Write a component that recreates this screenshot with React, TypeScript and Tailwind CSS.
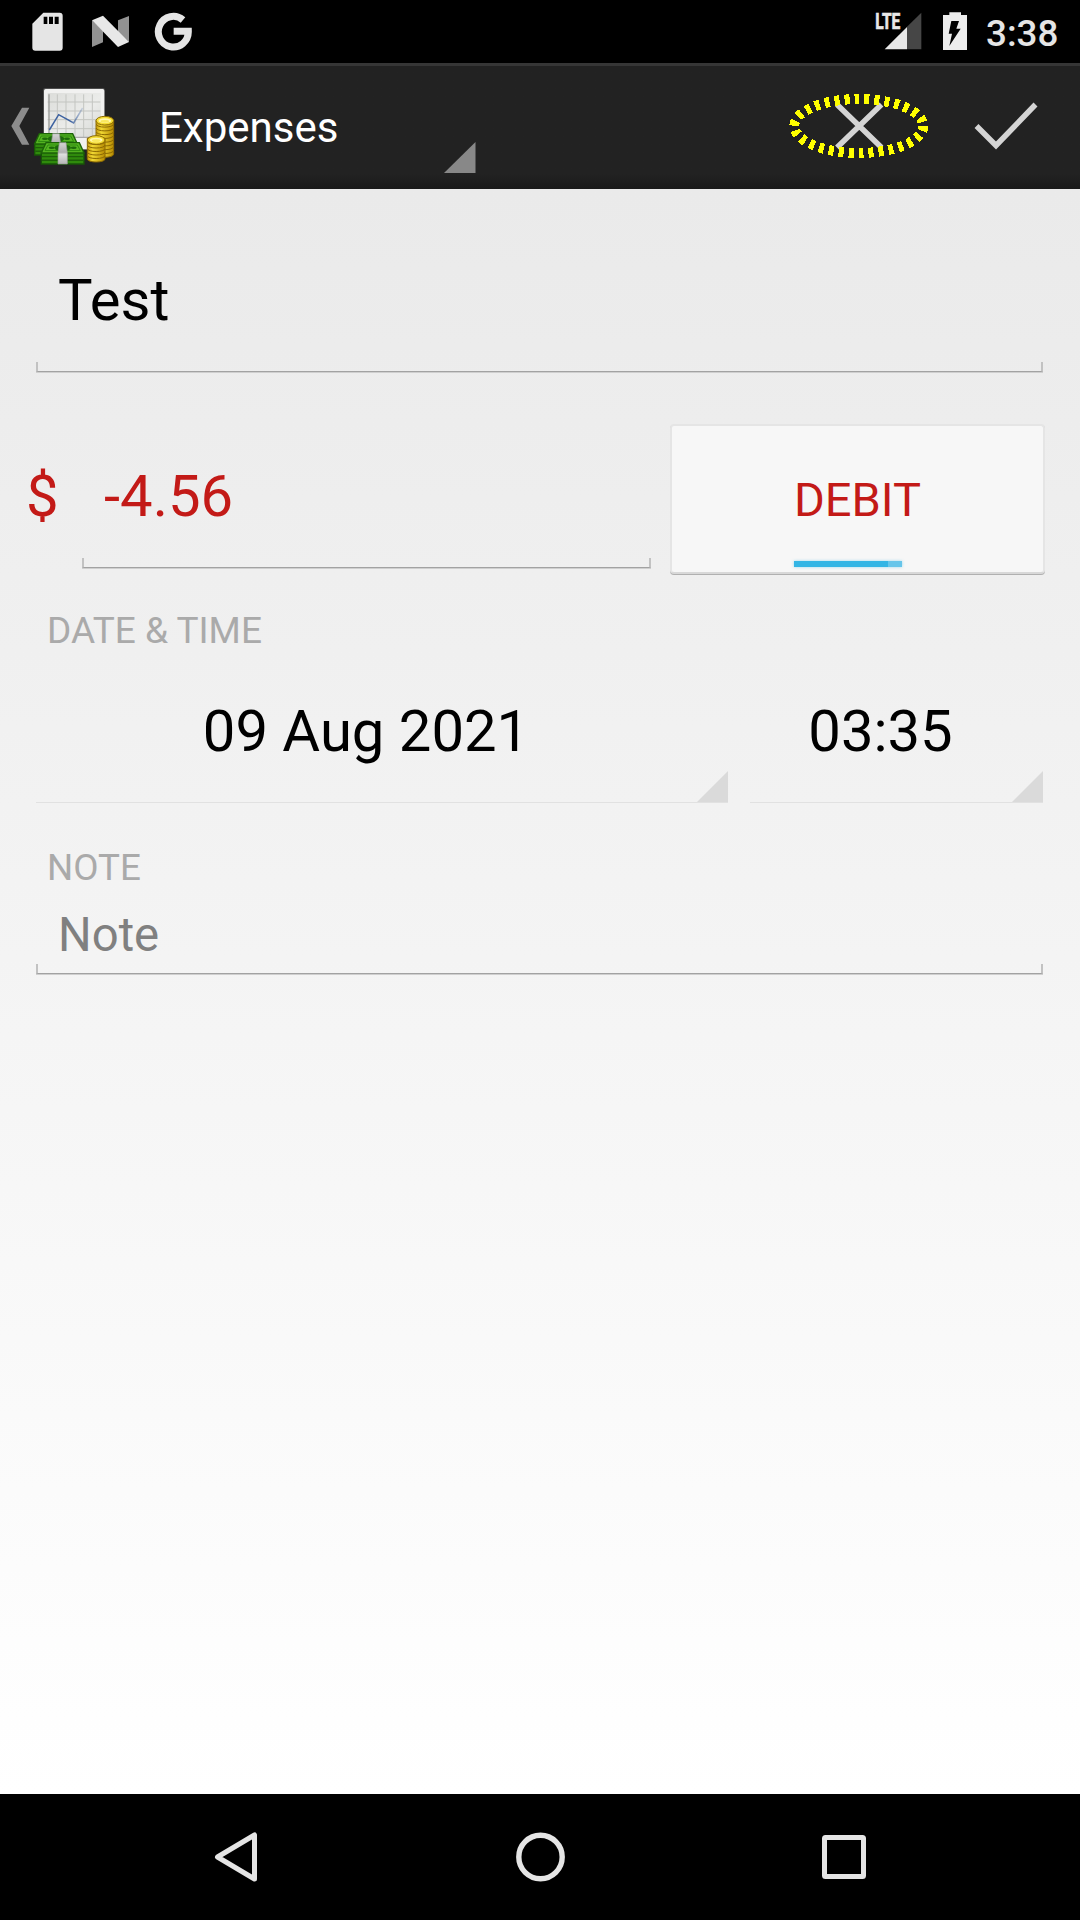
import React from "react";

function StatusBar() {
  return (
    <div className="flex h-[63px] items-start bg-black">
      <svg className="mt-3 ml-8 h-[39px] w-[31px]" viewBox="96 36 93 117">
        <path
          fill="#e5e5e5"
          fillRule="evenodd"
          d="M130 38H179Q188 38 188 47V143Q188 152 179 152H106Q97 152 97 143V71ZM131 50V72H142V50ZM147 50V72H159V50ZM164 50V72H176V50Z"
        />
      </svg>
      <svg className="mt-[15px] ml-[28px] h-[33px] w-[39px]" viewBox="273 45 117 99">
        <path fill="#929292" d="M276 61L309 92V127L276 141ZM354 61L387 48V127L354 96Z" />
        <path fill="#e8e8e8" d="M276 61L309 47L387 126L354 141Z" />
      </svg>
      <svg className="mt-[11px] ml-[24px] h-[41px] w-[39px]" viewBox="462 33 117 123">
        <path
          fill="none"
          stroke="#e5e5e5"
          strokeWidth="21"
          d="M549 60A45 46 0 1 0 565 94H521"
        />
      </svg>
      <div className="ml-auto flex h-full items-start">
        <svg className="mt-[4px] h-[47px] w-[48px] overflow-visible" viewBox="42 12 144 141">
          <path fill="#464646" d="M141 80L184 38V148H141Z" />
          <path fill="#e8e8e8" d="M74 148L141 81V148Z" />
          <text
            x="46"
            y="87"
            fontFamily="Roboto"
            fontWeight="700"
            fontSize="66"
            fill="#e8e8e8"
            stroke="#e8e8e8"
            strokeWidth="2"
            textLength="75"
            lengthAdjust="spacingAndGlyphs"
          >
            LTE
          </text>
        </svg>
        <svg className="mt-3 ml-[20px] h-[39px] w-[27px]" viewBox="246 36 81 117">
          <path
            fill="#ececec"
            d="M249 45H268V37H303V45H321V150H249Z"
          />
          <path fill="#000" d="M274 63H297L289 86H302L268 138L276 101H266Z" />
        </svg>
        <span className="ml-[17px] w-[94px] text-[36.75px] leading-[67px] font-medium text-[#e5e5e5]">3:38</span>
      </div>
    </div>
  );
}

const coinStackTall = [0, 1, 2, 3, 4, 5, 6, 7, 8];
const coinStackShort = [0, 1, 2, 3, 4, 5];

function BillStack({ x, y, w, h }: { x: number; y: number; w: number; h: number }) {
  const top = h * 0.48;
  return (
    <g transform={`translate(${x} ${y})`}>
      <path d={`M2 ${top}H${w - 2}V${h}H2Z`} fill="#2f8a0c" stroke="#175407" strokeWidth="4" />
      <path d={`M4 ${top + 11}H${w - 4}M4 ${top + 22}H${w - 4}`} stroke="#1d5f08" strokeWidth="4" />
      <path d={`M16 0H${w - 16}L${w - 2} ${top}H2Z`} fill="#55b422" stroke="#1c6208" strokeWidth="4" />
      <path
        d={`M22 7H${w - 22}L${w - 13} ${top - 7}H13Z`}
        fill="none"
        stroke="#2e8a10"
        strokeWidth="3"
      />
      <ellipse cx={w / 2} cy={top / 2} rx="25" ry="10" fill="#1d6a0b" />
      <ellipse cx="33" cy={top / 2} rx="9" ry="4" fill="#1d6a0b" />
      <ellipse cx={w - 33} cy={top / 2} rx="9" ry="4" fill="#1d6a0b" />
      <path
        d={`M${w / 2 - 10} 0H${w / 2 + 10}L${w / 2 + 14} ${top}V${h}H${w / 2 - 14}V${top}Z`}
        fill="url(#band)"
        stroke="#9a9a9a"
        strokeWidth="2"
      />
    </g>
  );
}

function AppIcon() {
  return (
    <svg className="h-[126px] w-[120px] shrink-0" viewBox="0 9 360 378">
      <defs>
        <linearGradient id="band" x1="0" y1="0" x2="0" y2="1">
          <stop offset="0" stopColor="#d5d5d5" />
          <stop offset="0.45" stopColor="#b0b0b0" />
          <stop offset="0.55" stopColor="#dedede" />
          <stop offset="1" stopColor="#b5b5b5" />
        </linearGradient>
        <linearGradient id="gold" x1="0" y1="0" x2="1" y2="0">
          <stop offset="0" stopColor="#c79c0a" />
          <stop offset="0.3" stopColor="#f0d733" />
          <stop offset="1" stopColor="#b78b02" />
        </linearGradient>
        <linearGradient id="sheet" x1="0" y1="0" x2="1" y2="1">
          <stop offset="0" stopColor="#dcddda" />
          <stop offset="0.55" stopColor="#ebecea" />
          <stop offset="1" stopColor="#d6d8d4" />
        </linearGradient>
        <linearGradient id="trend" x1="148" y1="0" x2="250" y2="0" gradientUnits="userSpaceOnUse">
          <stop offset="0.6" stopColor="#3d62a0" />
          <stop offset="1" stopColor="#3d62a0" stopOpacity="0.15" />
        </linearGradient>
      </defs>
      <path fill="#8c8c8c" d="M66 143H88L58 198L88 254H66L34 198Z" />
      <rect x="129" y="84" width="186" height="186" rx="7" fill="#777" opacity="0.5" />
      <rect x="132" y="87" width="181" height="181" rx="5" fill="#f1f1f0" />
      <rect x="143" y="99" width="160" height="134" fill="url(#sheet)" />
      <path
        d="M172 103V233M198 103V233M225 103V233M251 103V233M277 103V233M143 126H301M143 153H301M143 179H301M143 206H301"
        stroke="#c3c5c1"
        strokeWidth="3"
      />
      <path d="M147 103V222" stroke="#9b9c99" strokeWidth="4" />
      <path d="M143 232H301" stroke="#aaa" strokeWidth="4" />
      <path d="M148 210L176 164L221 189L248 144" fill="none" stroke="url(#trend)" strokeWidth="4.5" />
      <BillStack x={102} y={221} w={132} h={64} />
      <BillStack x={122} y={248} w={132} h={64} />
      <g stroke="#8c6a02" strokeWidth="3">
        {coinStackTall.map((i) => (
          <path
            key={i}
            d="M288 272V282C288 295 341 295 341 282V272Z"
            transform={`translate(0 ${-i * 11.3})`}
            fill="url(#gold)"
          />
        ))}
        <ellipse cx="314.500" cy="182" rx="26.500" ry="13" fill="#f4dc35" />
        {coinStackShort.map((i) => (
          <path
            key={i}
            d="M262 287V297C262 309 315 309 315 297V287Z"
            transform={`translate(0 ${-i * 10.500})`}
            fill="url(#gold)"
          />
        ))}
        <ellipse cx="288.500" cy="240" rx="26.500" ry="13" fill="#f4dc35" />
      </g>
      <ellipse cx="314.500" cy="182" rx="19" ry="7" fill="#fff6b0" />
      <ellipse cx="288.500" cy="240" rx="19" ry="7" fill="#fff6b0" />
      <ellipse cx="314.500" cy="184" rx="13" ry="4" fill="#f9e85c" />
      <ellipse cx="288.500" cy="242" rx="13" ry="4" fill="#f9e85c" />
    </svg>
  );
}

function ActionBar() {
  return (
    <div className="flex h-[126px] border-t-3 border-[#363636] bg-linear-to-b from-[#222222] from-88% to-[#191919]">
      <div className="-mt-[3px] flex flex-1">
        <AppIcon />
        <button className="flex w-[356px] items-end justify-between pl-[39px]">
          <span className="self-center pt-[4px] text-[42px] leading-[48px] text-white">Expenses</span>
          <svg className="mb-[16px] h-[31px] w-[32px]" viewBox="0 0 32 31">
            <path d="M0 31L31.500 0V31Z" fill="#888" />
          </svg>
        </button>
        <svg className="ml-auto h-[126px] w-[148px]" viewBox="784 63 148 126">
          <path d="M837 104.500L881.500 147.500M881.500 104.500L837 147.500" stroke="#d4d4d4" strokeWidth="5.500" />
          <path
            d="M923.300 126A64.500 27 0 0 1 794.300 126A64.500 27 0 0 1 923.300 126"
            fill="none"
            stroke="#ffff00"
            strokeWidth="10"
            strokeDasharray="5 5"
            shapeRendering="crispEdges"
          />
        </svg>
        <svg className="h-[126px] w-[148px]" viewBox="932 63 148 126">
          <path d="M976.500 126L996 145.500L1035.500 104.500" fill="none" stroke="#d4d4d4" strokeWidth="5.500" />
        </svg>
      </div>
    </div>
  );
}

function Underline() {
  return (
    <span className="h-[10px] w-full border-x-2 border-b border-x-[#c2c2c2] border-b-[#a2a2a2] shadow-[0_1px_0_#cfcfcf]" />
  );
}

function Spinner({ label, width }: { label: string; width: string }) {
  return (
    <button className={`${width} relative flex h-[143px] items-center justify-center border-b border-[#e1e1e1] pr-[32px]`}>
      <span className="text-[58px] leading-[68px] text-black">{label}</span>
      <svg className="absolute right-0 bottom-0 h-[31px] w-[31px]" viewBox="0 0 31 31">
        <path d="M0 31L31 0V31Z" fill="#dadada" />
      </svg>
    </button>
  );
}

function ExpenseForm() {
  return (
    <main className="flex h-[1605px] flex-col bg-linear-to-b from-[#eaeaea] to-[#ffffff] pt-[40px]">
      <div className="mr-[37px] ml-[36px] flex h-[143px] flex-col">
        <span className="mt-[37px] mb-auto ml-[22px] text-[58px] leading-[68px] text-black">Test</span>
        <Underline />
      </div>

      <div className="mt-[52px] flex h-[151px] pl-[26px]">
        <span className="mt-[38px] w-[56px] text-[58px] leading-[68px] text-[#c31a17]">$</span>
        <div className="flex h-[144px] w-[569px] flex-col">
          <span className="mt-[38px] mb-auto ml-[22px] text-[58px] leading-[68px] text-[#c31a17]">-4.56</span>
          <Underline />
        </div>
        <button className="ml-[19px] flex h-[150px] w-[375px] flex-col items-center rounded-[4px] border-2 border-[#e5e5e5] border-b-[#d8d8d8] bg-[#f7f7f7] shadow-[0_1px_0_#b0b0b0]">
          <span className="mt-[46px] text-[47px] leading-[56px] text-[#c31a17]">DEBIT</span>
          <span className="mt-auto mr-[20px] mb-[5px] flex h-[6px] w-[108px] bg-[#33b5e5] shadow-[0_0_3px_#33b5e580]">
            <span className="ml-auto w-[14px] bg-[#66c5ea]" />
          </span>
        </button>
      </div>

      <h2 className="mt-[35px] ml-[47px] text-[37px] leading-[42px] text-[#aaaaaa]">DATE &amp; TIME</h2>
      <div className="mt-[8px] mr-[37px] ml-[36px] flex justify-between">
        <Spinner label="09 Aug 2021" width="w-[692px]" />
        <Spinner label="03:35" width="w-[293px]" />
      </div>

      <h2 className="mt-[44px] ml-[47px] text-[36.75px] leading-[42px] text-[#aaaaaa]">NOTE</h2>
      <div className="mr-[37px] ml-[36px] flex h-[85px] flex-col">
        <span className="mt-[18px] mb-auto ml-[22px] text-[47.25px] leading-[56px] text-[#808080]">Note</span>
        <Underline />
      </div>
    </main>
  );
}

function NavigationBar() {
  return (
    <div className="flex h-[126px] items-center justify-between bg-black pr-[211px] pl-[212px]">
      <svg className="h-[52px] w-[50px]" viewBox="212 1831 50 52">
        <path
          d="M254.500 1835V1879L217.500 1857Z"
          fill="none"
          stroke="#e5e5e5"
          strokeWidth="5"
          strokeLinejoin="round"
        />
      </svg>
      <svg className="h-[52px] w-[52px]" viewBox="0 0 52 52">
        <circle cx="25.500" cy="26" r="21.700" fill="none" stroke="#e5e5e5" strokeWidth="5.400" />
      </svg>
      <svg className="h-[52px] w-[50px]" viewBox="819 1831 50 52">
        <rect
          x="824.500"
          y="1837.500"
          width="39"
          height="39"
          rx="1"
          fill="none"
          stroke="#e5e5e5"
          strokeWidth="5"
          strokeLinejoin="round"
        />
      </svg>
    </div>
  );
}

export default function App() {
  return (
    <div className="flex h-[1920px] w-[1080px] flex-col overflow-hidden font-['Roboto',sans-serif]">
      <StatusBar />
      <ActionBar />
      <ExpenseForm />
      <NavigationBar />
    </div>
  );
}
